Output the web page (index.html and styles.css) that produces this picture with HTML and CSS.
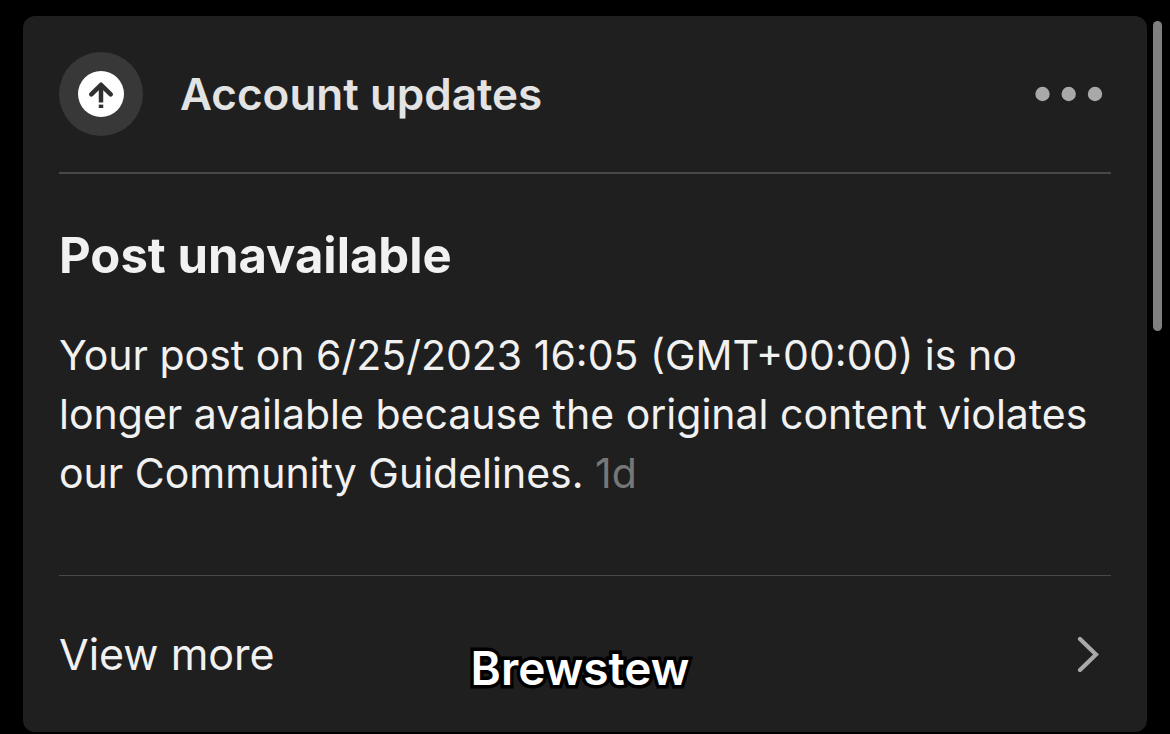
FILE: index.html
```html
<!DOCTYPE html>
<html lang="en">
<head>
<meta charset="utf-8">
<meta name="viewport" content="width=device-width, initial-scale=1">
<title>Account updates</title>
<link rel="stylesheet" href="styles.css">
</head>
<body>
<div class="screen">
  <main class="card">
    <header class="card-header">
      <span class="badge">
        <svg viewBox="0 0 84 84" aria-hidden="true">
          <circle cx="42" cy="42" r="23" fill="#fff"/>
          <path d="M42 50.500V34" fill="none" stroke="#303030" stroke-width="4.500"/>
          <path d="M32.300 42.300 42 32.800l9.700 9.500" fill="none" stroke="#303030" stroke-width="4.600" stroke-linecap="round" stroke-linejoin="round"/>
          <path d="M42 52.600v3.400" stroke="#303030" stroke-width="4.500"/>
        </svg>
      </span>
      <h1 class="title">Account updates</h1>
      <button class="more" type="button" aria-label="More options">
        <svg viewBox="0 0 68 16" aria-hidden="true" fill="#a9a9a9">
          <circle cx="7.500" cy="8" r="7.200"/><circle cx="33.700" cy="8" r="7.200"/><circle cx="60" cy="8" r="7.200"/>
        </svg>
      </button>
    </header>
    <section class="notice">
      <h2 class="heading">Post unavailable</h2>
      <p class="message">Your post on 6/25/2023 16:05 (GMT+00:00) is no longer available because the original content violates our Community Guidelines. <time class="age">1d</time></p>
    </section>
    <a class="view-more" href="#details">
      <span>View more</span>
      <svg class="chevron" viewBox="0 0 22 36" aria-hidden="true">
        <path d="m3 3 16 15.500L3 34" fill="none" stroke="#a9a9a9" stroke-width="4.200" stroke-linecap="round"/>
      </svg>
    </a>
  </main>
  <div class="scroll-thumb"></div>
  <div class="caption">Brewstew</div>
</div>
</body>
</html>
```
FILE: styles.css
```css
* { box-sizing: border-box; }
body {
  margin: 0;
  background: #000;
  color: #f1f1f1;
  font-family: Inter, "Liberation Sans", sans-serif;
}
.screen { position: relative; padding: 16px 23px 2px; }
.card {
  padding: 0 36px;
  border-radius: 12px;
  background: #1f1f1f;
}
.card-header {
  display: flex;
  align-items: center;
  gap: 37px;
  padding: 36px 0;
  border-bottom: 2px solid #484848;
}
.badge {
  width: 84px;
  height: 84px;
  border-radius: 50%;
  background: #383838;
}
.badge svg, .more svg { display: block; }
.title {
  flex: 1;
  margin: 0;
  color: #e3e3e3;
  font-size: 44px;
  font-weight: 600;
  line-height: 56px;
}
.more {
  width: 68px;
  margin-right: 8px;
  padding: 0;
  border: 0;
  background: none;
}
.notice { padding: 52px 0 72px; }
.heading {
  margin: 0 0 40px;
  font-size: 49px;
  font-weight: 650;
  line-height: 60px;
}
.message {
  margin: 0;
  font-size: 41px;
  line-height: 59px;
}
.age { color: #777; }
.view-more {
  display: flex;
  align-items: center;
  justify-content: space-between;
  padding: 49px 12px 49px 0;
  border-top: 1px solid #484848;
  color: inherit;
  font-size: 43px;
  line-height: 58px;
  text-decoration: none;
}
.chevron { width: 22px; height: 36px; }
.scroll-thumb {
  position: absolute;
  top: 21px;
  right: 8px;
  width: 9px;
  height: 310px;
  border-radius: 5px;
  background: #7f7f7f;
}
.caption {
  position: absolute;
  top: 639px;
  left: 0;
  right: 10px;
  color: #fff;
  font-size: 46px;
  font-weight: 600;
  line-height: 58px;
  text-align: center;
  -webkit-text-stroke: 7px #000;
  paint-order: stroke fill;
  stroke-linejoin: round;
  pointer-events: none;
}
```
